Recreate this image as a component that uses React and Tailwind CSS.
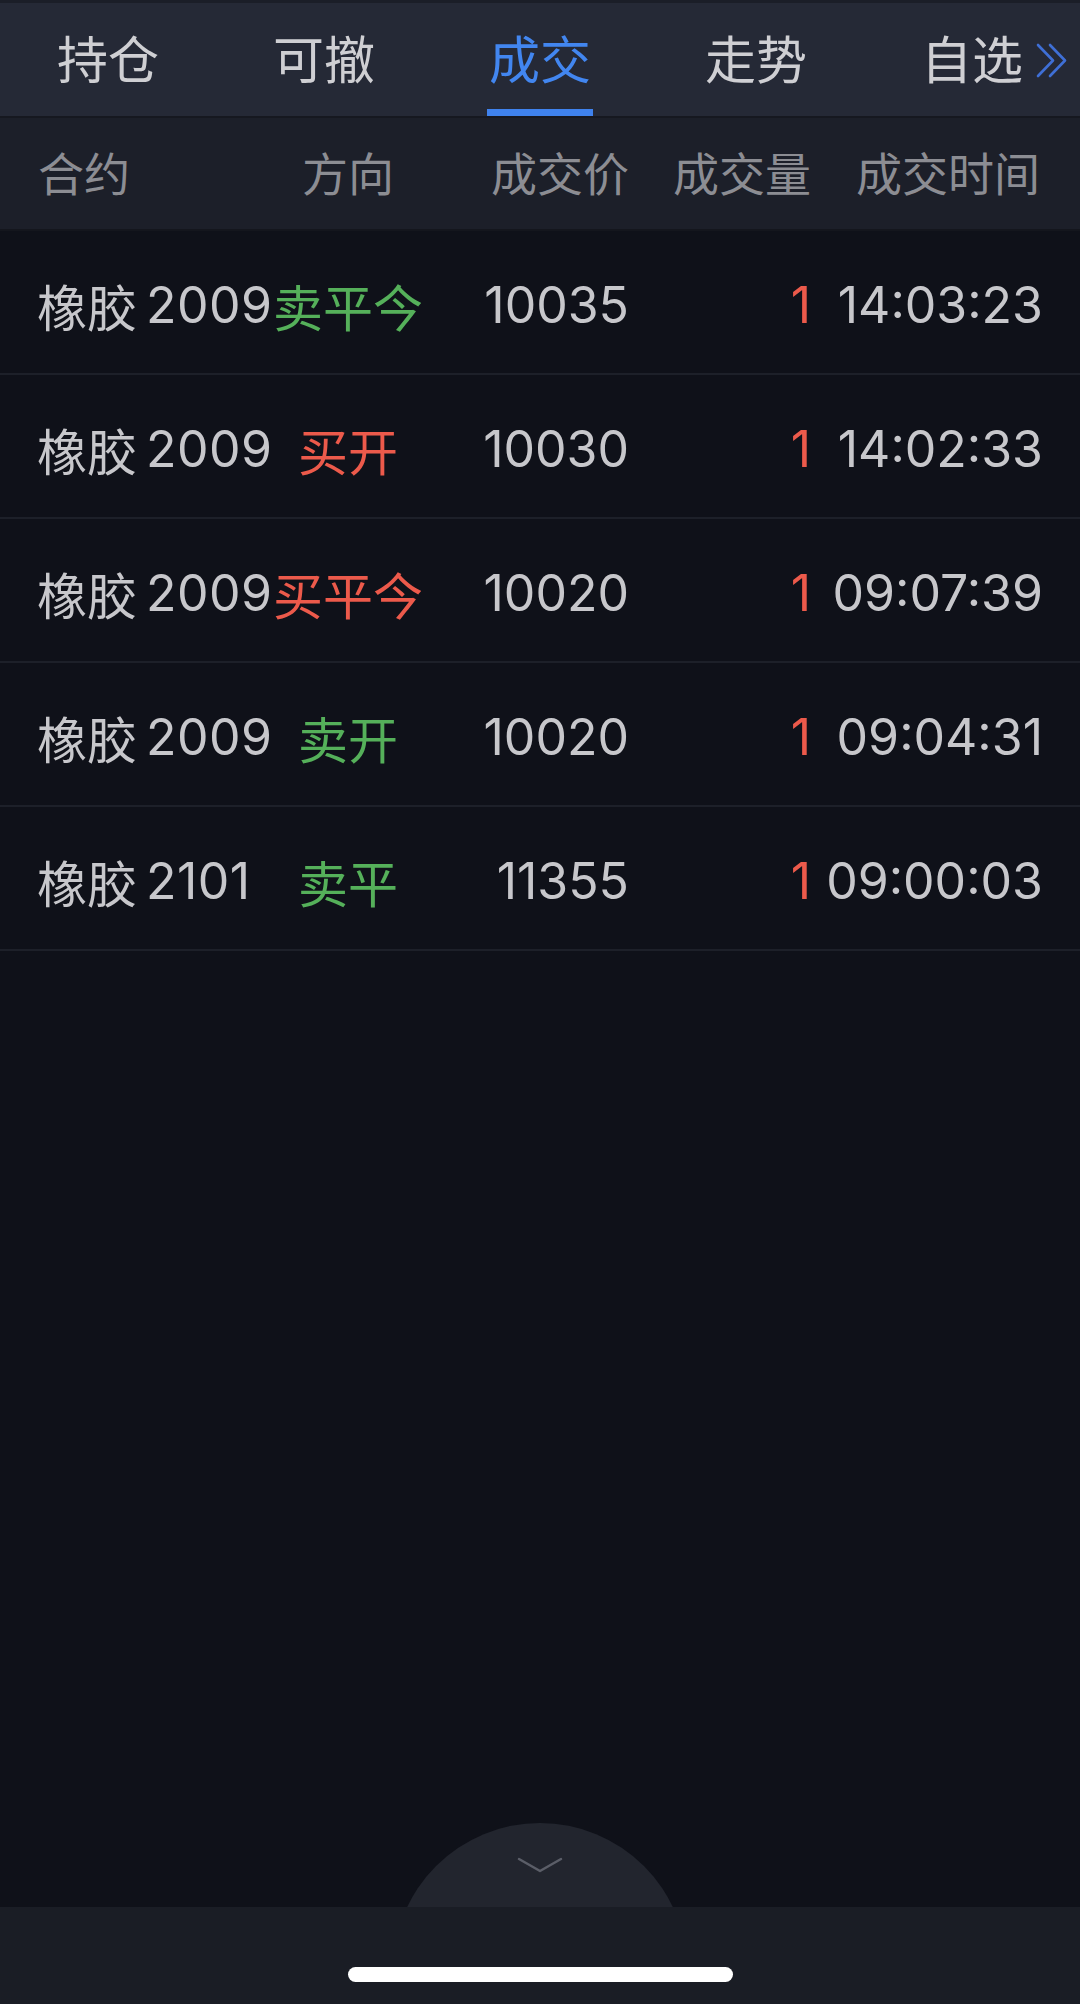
import React from 'react';

const tabs = ['持仓', '可撤', '成交', '走势', '自选'];

const trades = [
  { name: '橡胶', code: '2009', dir: '卖平今', buy: false, price: '10035', vol: '1', time: '14:03:23' },
  { name: '橡胶', code: '2009', dir: '买开', buy: true, price: '10030', vol: '1', time: '14:02:33' },
  { name: '橡胶', code: '2009', dir: '买平今', buy: true, price: '10020', vol: '1', time: '09:07:39' },
  { name: '橡胶', code: '2009', dir: '卖开', buy: false, price: '10020', vol: '1', time: '09:04:31' },
  { name: '橡胶', code: '2101', dir: '卖平', buy: false, price: '11355', vol: '1', time: '09:00:03' },
];

function MoreIcon() {
  return (
    <svg width="31" height="35" viewBox="0 0 31 35" fill="none" stroke="#3f6fd6" strokeWidth="2.6" strokeLinecap="round" strokeLinejoin="round">
      <polyline points="2,2 17,17.5 2,33" />
      <polyline points="14,2 29,17.5 14,33" />
    </svg>
  );
}

export default function App() {
  return (
    <div className="h-[2004px] w-[1080px] flex flex-col bg-[#0f1119] overflow-hidden" style={{ fontFamily: 'Inter, "Noto Sans CJK SC", sans-serif' }}>
      {/* tabs */}
      <div className="relative h-[118px] flex bg-[#252936] border-t-[3px] border-b-2 border-t-[#1b1e28] border-b-[#161820]">
        {tabs.map((t, i) => (
          <div key={t} className="w-[216px] flex flex-col items-center">
            <div className={`flex-1 flex items-center pt-[2px] text-[51px] leading-none ${i === 2 ? 'text-[#4286f0]' : 'text-[#cfcfd3]'}`} style={{ fontFamily: '"Noto Sans CJK SC", sans-serif' }}>
              {t}
            </div>
            <div className={`w-[106px] h-[7px] ${i === 2 ? 'bg-[#3f82ee]' : 'bg-transparent'}`} />
          </div>
        ))}
        <div className="absolute right-[13px] top-[40px]">
          <MoreIcon />
        </div>
      </div>

      {/* header */}
      <div className="h-[113px] flex items-center pb-[5px] pl-[38px] pr-[40px] bg-[#1c1f29] border-b-2 border-[#14161d] text-[46px] leading-none text-[#8c8d93]" style={{ fontFamily: '"Noto Sans CJK SC", sans-serif' }}>
        <div className="w-[235px]">合约</div>
        <div className="w-[150px] text-center">方向</div>
        <div className="w-[206px] text-right">成交价</div>
        <div className="w-[182px] text-right">成交量</div>
        <div className="flex-1 text-right">成交时间</div>
      </div>

      {/* rows */}
      {trades.map((r, i) => (
        <div key={i} className="h-[144px] flex items-center pt-[5px] pl-[37px] pr-[37px] border-b-2 border-[#1d2029] text-[50px] leading-none text-[#c7c7cb]">
          <div className="w-[236px] whitespace-nowrap flex items-center">
            <span style={{ fontFamily: '"Noto Sans CJK SC", sans-serif' }}>{r.name}</span>
            <span className="ml-[9px] tracking-[0.5px]">{r.code}</span>
          </div>
          <div className={`w-[150px] text-center whitespace-nowrap ${r.buy ? 'text-[#ec5a4b]' : 'text-[#55b05a]'}`} style={{ fontFamily: '"Noto Sans CJK SC", sans-serif' }}>
            {r.dir}
          </div>
          <div className="w-[206px] text-right">{r.price}</div>
          <div className="w-[182px] text-right text-[#ec5a4b]">{r.vol}</div>
          <div className="flex-1 text-right">{r.time}</div>
        </div>
      ))}

      {/* empty area with collapse button */}
      <div className="relative flex-1 overflow-hidden">
        <div className="absolute left-1/2 -translate-x-1/2 bottom-[-210px] w-[294px] h-[294px] rounded-full bg-[#22252e] flex justify-center pt-[34px]">
          <svg width="46" height="16" viewBox="0 0 46 16" fill="none" stroke="#5b5e68" strokeWidth="2.5" strokeLinecap="round" strokeLinejoin="round">
            <polyline points="2,2 23,14 44,2" />
          </svg>
        </div>
      </div>

      {/* bottom bar */}
      <div className="relative h-[97px] bg-[#1a1d25] flex justify-center pt-[60px]">
        <div className="w-[385px] h-[15px] rounded-full bg-white" />
      </div>
    </div>
  );
}
